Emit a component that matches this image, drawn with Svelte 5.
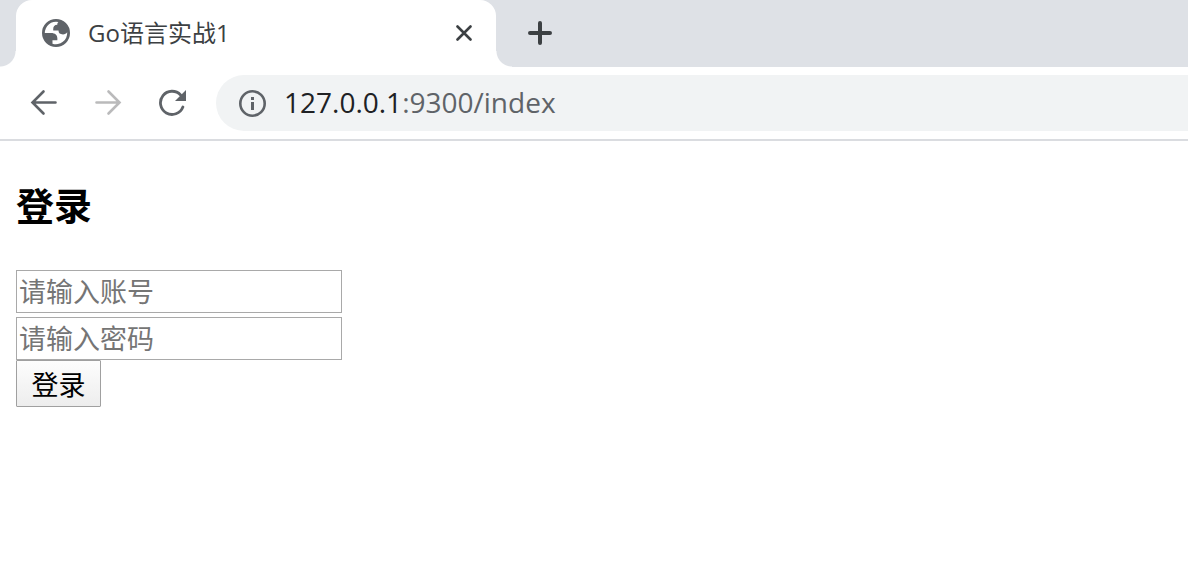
<script lang="ts">
	let account = $state('');
	let password = $state('');

	const tabTitle = 'Go语言实战1';
	const host = '127.0.0.1';
	const path = ':9300/index';

	function handleSubmit(event: SubmitEvent) {
		event.preventDefault();
	}
</script>

<div class="browser">
	<div class="tab-strip">
		<div class="tab">
			<svg class="favicon" viewBox="2 2 20 20" aria-hidden="true">
				<path
					fill="#5f6368"
					fill-rule="evenodd"
					d="M12 2a10 10 0 1 1 0 20a10 10 0 0 1 0-20zM4 12h4.4c3.407.022 4.922 1.73 4.543 5.127H9.488v2.47a8.004 8.004 0 0 0 10.498-8.083C19.327 12.504 18.332 13 17 13c-2.137 0-3.206-.916-3.206-2.75h-3.748c-.274-2.728.683-4.092 2.87-4.092 0-.975.327-1.597.811-1.97A8.004 8.004 0 0 0 4 12z"
				/>
			</svg>
			<span class="tab-title">{tabTitle}</span>
			<button type="button" class="icon-button close" aria-label="Close tab">
				<svg width="16" height="16" viewBox="0 0 16 16">
					<path d="M1.500 1.500l13 13M14.500 1.500l-13 13" stroke="#3c4043" stroke-width="2.600" stroke-linecap="round" />
				</svg>
			</button>
		</div>
		<button type="button" class="icon-button new-tab" aria-label="New tab">
			<svg width="24" height="24" viewBox="0 0 24 24">
				<path d="M12 2v20M2 12h20" stroke="#3c4043" stroke-width="4" stroke-linecap="round" />
			</svg>
		</button>
	</div>

	<div class="toolbar">
		<button type="button" class="icon-button" aria-label="Back">
			<svg width="28" height="28" viewBox="0 0 28 28" fill="none" stroke="#5f6368" stroke-width="2.600" stroke-linecap="round">
				<path d="M25.500 13.500H3M13.500 2.500l-11 11 11 11" />
			</svg>
		</button>
		<button type="button" class="icon-button" aria-label="Forward" disabled>
			<svg width="28" height="28" viewBox="0 0 28 28" fill="none" stroke="#bababb" stroke-width="2.600" stroke-linecap="round">
				<path d="M2.500 13.500H25M14.500 2.500l11 11-11 11" />
			</svg>
		</button>
		<button type="button" class="icon-button" aria-label="Reload">
			<svg width="28" height="28" viewBox="0 0 28 28">
				<path d="M24.900 18A11.600 11.600 0 1 1 22.600 6" fill="none" stroke="#5f6368" stroke-width="2.800" stroke-linecap="round" />
				<path d="M28 1v11H17z" fill="#5f6368" />
			</svg>
		</button>
		<div class="address-bar">
			<svg width="28" height="28" viewBox="0 0 28 28" aria-hidden="true">
				<circle cx="14.500" cy="14.500" r="12.200" fill="none" stroke="#5f6368" stroke-width="2.600" />
				<path d="M14.500 8v3M14.500 13v8" stroke="#5f6368" stroke-width="3" />
			</svg>
			<span class="url"><span class="host">{host}</span>{path}</span>
		</div>
	</div>
</div>

<main>
	<h3>登录</h3>
	<form onsubmit={handleSubmit}>
		<input type="text" bind:value={account} placeholder="请输入账号" aria-label="请输入账号" />
		<input type="password" bind:value={password} placeholder="请输入密码" aria-label="请输入密码" />
		<button type="submit" class="login">登录</button>
	</form>
</main>

<style>
	:global(body) {
		margin: 0;
		background: #fff;
		font-family: 'Open Sans', 'Noto Sans CJK SC', sans-serif;
	}

	svg {
		display: block;
		flex: none;
	}

	.browser {
		border-bottom: 2px solid #dadce0;
	}

	.tab-strip {
		display: flex;
		align-items: center;
		height: 66px;
		padding: 0 16px 1px;
		background: #dee1e6;
	}

	.tab {
		position: relative;
		display: flex;
		align-items: center;
		box-sizing: border-box;
		width: 480px;
		height: 67px;
		margin-bottom: -1px;
		padding: 0 24px 1px 26px;
		border-radius: 16px 16px 0 0;
		background: #fff;
	}

	/* flared feet of the active tab */
	.tab::before,
	.tab::after {
		content: '';
		position: absolute;
		bottom: 0;
		width: 16px;
		height: 16px;
	}

	.tab::before {
		right: 100%;
		background: radial-gradient(circle at 0 0, transparent 15px, #fff 16px);
	}

	.tab::after {
		left: 100%;
		background: radial-gradient(circle at 100% 0, transparent 15px, #fff 16px);
	}

	.favicon {
		width: 28px;
		height: 28px;
		margin-right: 18px;
	}

	.tab-title {
		flex: 1;
		color: #3c4043;
		font-size: 24px;
		line-height: 32px;
		white-space: nowrap;
	}

	.icon-button {
		display: flex;
		align-items: center;
		justify-content: center;
		padding: 0;
		border: none;
		background: none;
	}

	.new-tab {
		margin-left: 32px;
	}

	.toolbar {
		display: flex;
		align-items: center;
		gap: 36px;
		height: 56px;
		padding: 8px 0 8px 30px;
		background: #fff;
	}

	.address-bar {
		display: flex;
		flex: 1;
		align-items: center;
		gap: 18px;
		height: 56px;
		margin-left: -6px;
		padding-left: 22px;
		border-radius: 28px 0 0 28px;
		background: #f1f3f4;
	}

	.url {
		padding-bottom: 2px;
		color: #5f6368;
		font-size: 28px;
		line-height: 40px;
		white-space: nowrap;
	}

	.host {
		color: #202124;
	}

	main {
		padding: 36px 16px;
	}

	h3 {
		margin: 0 0 37px;
		color: #000;
		font-size: 38px;
		line-height: 56px;
	}

	form {
		display: flex;
		flex-direction: column;
		align-items: flex-start;
	}

	input {
		box-sizing: border-box;
		width: 326px;
		max-width: 100%;
		height: 43px;
		margin: 0 0 4px;
		padding: 0 2px;
		border: 1px solid #a9a9a9;
		background: #fff;
		font-family: inherit;
		font-size: 27px;
	}

	input[type='password'] {
		margin-bottom: 0;
	}

	input::placeholder {
		color: #757575;
	}

	.login {
		min-width: 85px;
		height: 47px;
		padding: 0 14px;
		border: 1px solid #a0a0a0;
		border-radius: 1px;
		background: linear-gradient(#fdfdfd, #ededed);
		color: #000;
		font-family: inherit;
		font-size: 27px;
	}
</style>
